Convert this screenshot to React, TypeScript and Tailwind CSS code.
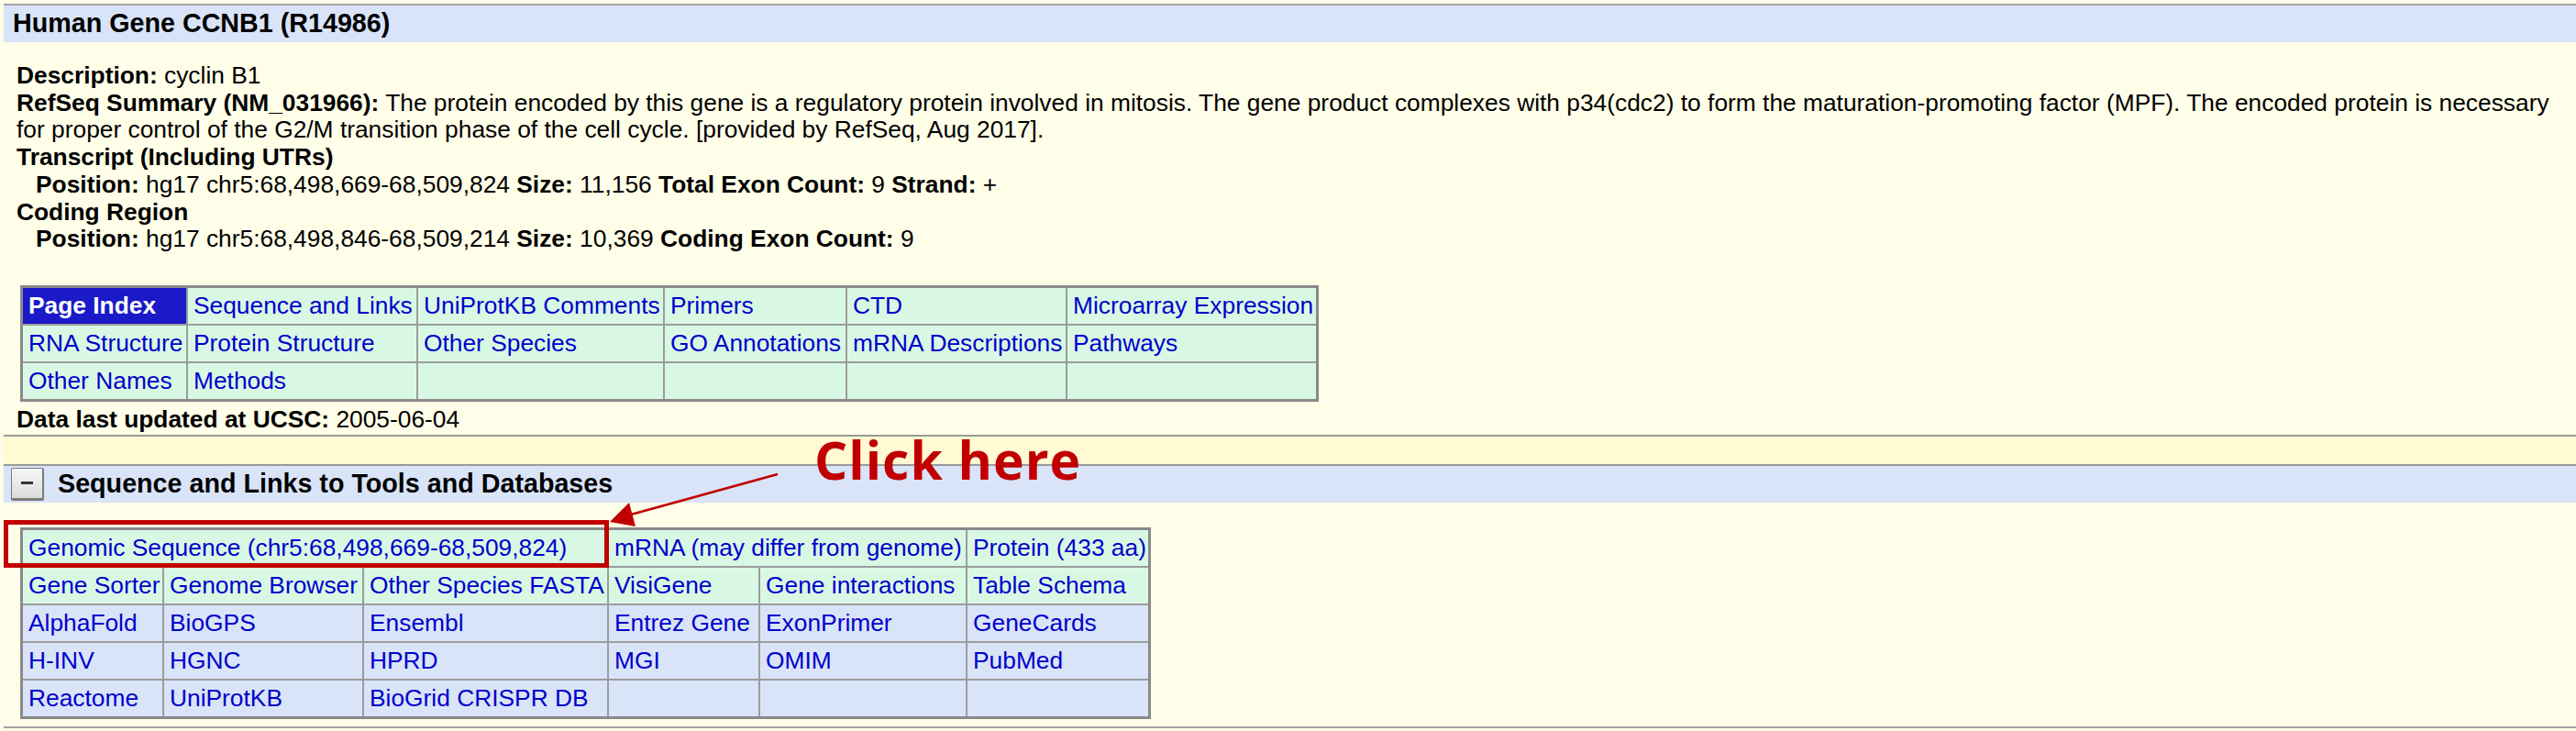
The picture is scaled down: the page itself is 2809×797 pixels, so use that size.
import React from "react";
import clsx from "clsx";

const indexRows = [
  ["Page Index", "Sequence and Links", "UniProtKB Comments", "Primers", "CTD", "Microarray Expression"],
  ["RNA Structure", "Protein Structure", "Other Species", "GO Annotations", "mRNA Descriptions", "Pathways"],
  ["Other Names", "Methods", "", "", "", ""],
];
const indexCols = ["w-[180px]", "w-[251px]", "w-[269px]", "w-[199px]", "w-[240px]", "w-[271px]"];

const linkRows = [
  ["Gene Sorter", "Genome Browser", "Other Species FASTA", "VisiGene", "Gene interactions", "Table Schema"],
  ["AlphaFold", "BioGPS", "Ensembl", "Entrez Gene", "ExonPrimer", "GeneCards"],
  ["H-INV", "HGNC", "HPRD", "MGI", "OMIM", "PubMed"],
  ["Reactome", "UniProtKB", "BioGrid CRISPR DB", "", "", ""],
];
const linkCols = ["w-[154px]", "w-[218px]", "w-[267px]", "w-[165px]", "w-[226px]", "w-[197px]"];

type CellProps = {
  text: string;
  span?: number;
  right?: boolean;
  bottom?: boolean;
  tone?: "green" | "blue";
  active?: boolean;
};

function Cell({ text, span = 1, right = true, bottom = true, tone = "green", active = false }: CellProps) {
  return (
    <td
      colSpan={span}
      className={clsx(
        "whitespace-nowrap border-[#9c9c9c] px-[6px] py-[4px] align-middle leading-[31px]",
        right && "border-r-2",
        bottom && "border-b-2",
        active
          ? "bg-[#1a1ac8] font-bold text-white"
          : tone === "green"
            ? "bg-[#d9f8e4] text-[#0000cc]"
            : "bg-[#d9e4f8] text-[#0000cc]"
      )}
    >
      {text && <a href="#">{text}</a>}
    </td>
  );
}

function Label({ children }: { children: React.ReactNode }) {
  return <b className="font-bold">{children}</b>;
}

export default function App() {
  return (
    <div className="relative h-[797px] w-[2809px] overflow-hidden bg-[#fffee8] font-['Liberation_Sans',Arial,Helvetica,sans-serif] text-[26.35px] text-black">
      <div className="ml-[4px] pt-[4px]">
        {/* gene header */}
        <div className="flex h-[42px] items-center border-t-2 border-[#a3a3a3] bg-[#d9e4f8] pl-[10px] text-[28.7px] font-bold">
          Human Gene CCNB1 (R14986)
        </div>

        {/* summary */}
        <div className="mt-[22px] pl-[14px] leading-[29.7px]">
          <div>
            <Label>Description:</Label> cyclin B1
          </div>
          <div>
            <Label>RefSeq Summary (NM_031966):</Label> The protein encoded by this gene is a regulatory protein involved in
            mitosis. The gene product complexes with p34(cdc2) to form the maturation-promoting factor (MPF). The encoded
            protein is necessary
            <br />
            for proper control of the G2/M transition phase of the cell cycle. [provided by RefSeq, Aug 2017].
          </div>
          <div>
            <Label>Transcript (Including UTRs)</Label>
          </div>
          <div className="pl-[21px]">
            <Label>Position:</Label> hg17 chr5:68,498,669-68,509,824 <Label>Size:</Label> 11,156{" "}
            <Label>Total Exon Count:</Label> 9 <Label>Strand:</Label> +
          </div>
          <div>
            <Label>Coding Region</Label>
          </div>
          <div className="pl-[21px]">
            <Label>Position:</Label> hg17 chr5:68,498,846-68,509,214 <Label>Size:</Label> 10,369{" "}
            <Label>Coding Exon Count:</Label> 9
          </div>
        </div>

        {/* page index */}
        <table className="ml-[18px] mt-[35px] w-[1416px] table-fixed border-separate border-spacing-0 border-[3px] border-[#8a8a8a]">
          <colgroup>
            {indexCols.map((w, i) => (
              <col key={i} className={w} />
            ))}
          </colgroup>
          <tbody>
            {indexRows.map((row, r) => (
              <tr key={r}>
                {row.map((t, c) => (
                  <Cell
                    key={c}
                    text={t}
                    active={r === 0 && c === 0}
                    right={c < row.length - 1}
                    bottom={r < indexRows.length - 1}
                  />
                ))}
              </tr>
            ))}
          </tbody>
        </table>

        <div className="mt-[4px] pl-[14px] leading-[30px]">
          <Label>Data last updated at UCSC:</Label> 2005-06-04
        </div>

        {/* section separator */}
        <div className="mt-[2px] h-[32px] border-t-2 border-[#9a9a9a] bg-[#fff9d4]" />
        <div className="flex h-[42px] items-center border-t-2 border-[#9a9a9a] bg-[#d9e4f8]">
          <button className="ml-[8px] flex h-[36px] w-[36px] items-center justify-center rounded-[2px] border border-b-[3px] border-r-[2px] border-[#7a7a7a] bg-gradient-to-b from-[#f6f6f6] to-[#dcdcdc]">
            <span className="block h-[3px] w-[13px] bg-[#333]" />
          </button>
          <span className="ml-[15px] text-[28.7px] font-bold">Sequence and Links to Tools and Databases</span>
        </div>

        {/* sequence links */}
        <table className="ml-[18px] mt-[27px] w-[1233px] table-fixed border-separate border-spacing-0 border-[3px] border-[#8a8a8a]">
          <colgroup>
            {linkCols.map((w, i) => (
              <col key={i} className={w} />
            ))}
          </colgroup>
          <tbody>
            <tr>
              <Cell text="Genomic Sequence (chr5:68,498,669-68,509,824)" span={3} />
              <Cell text="mRNA (may differ from genome)" span={2} />
              <Cell text="Protein (433 aa)" right={false} />
            </tr>
            {linkRows.map((row, r) => (
              <tr key={r}>
                {row.map((t, c) => (
                  <Cell
                    key={c}
                    text={t}
                    tone={r === 0 ? "green" : "blue"}
                    right={c < row.length - 1}
                    bottom={r < linkRows.length - 1}
                  />
                ))}
              </tr>
            ))}
          </tbody>
        </table>

        <div className="mt-[8px] border-t-2 border-[#a3a3a3]" />
      </div>

      {/* annotation overlay */}
      <svg className="pointer-events-none absolute left-0 top-0" width="2809" height="797" viewBox="0 0 2809 797">
        <rect x="6.5" y="569.5" width="655" height="47" fill="none" stroke="#c00000" strokeWidth="5" />
        <line x1="848" y1="517" x2="688" y2="561" stroke="#c00000" strokeWidth="2.5" />
        <polygon points="665,569 686,548 693,574" fill="#c00000" />
      </svg>
      <div className="absolute left-[888px] top-[473px] font-['Open_Sans',sans-serif] text-[57px] font-bold leading-none tracking-[1px] text-[#c00000]">
        Click here
      </div>
    </div>
  );
}
